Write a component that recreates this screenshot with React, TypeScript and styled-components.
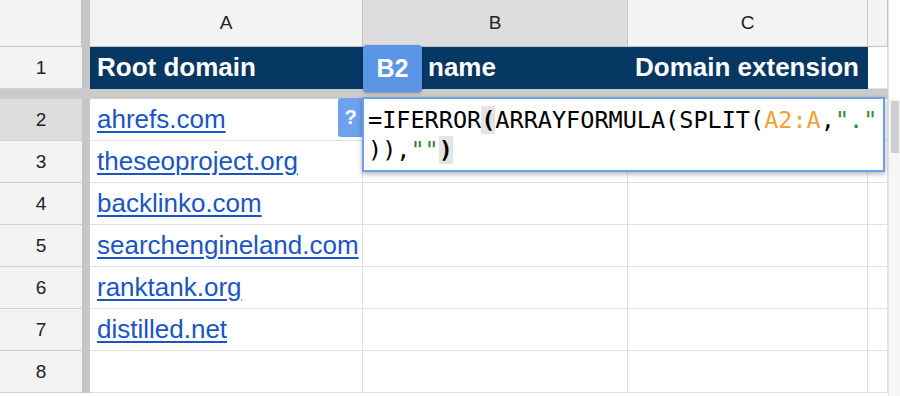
import styled, {createGlobalStyle} from 'styled-components'

const GlobalStyle = createGlobalStyle`
  html, body {
    margin: 0;
    padding: 0;
    background: #ffffff;
    overflow: hidden;
  }
  * {
    box-sizing: border-box;
  }
`

const COLUMNS = '82px 8px 273px 265px 240px 20px'
const SANS = '"Liberation Sans", Arial, sans-serif'
const MONO = '"DejaVu Sans Mono", "Liberation Mono", monospace'

const Sheet = styled.div`
  position: relative;
  display: flex;
  width: 900px;
  height: 396px;
  overflow: hidden;
  font-family: ${SANS};
`
const Grid = styled.div`
  display: flex;
  flex-direction: column;
  width: 888px;
  flex: none;
`
const Row = styled.div<{$h: number}>`
  display: grid;
  grid-template-columns: ${COLUMNS};
  height: ${p => p.$h}px;
  flex: none;
`
const HeadCell = styled.div<{$selected?: boolean}>`
  display: flex;
  align-items: center;
  justify-content: center;
  background: ${p => (p.$selected ? '#dddddd' : '#f3f3f3')};
  border-right: 1px solid #c4c4c4;
  border-bottom: 1px solid #c4c4c4;
  font-size: 19px;
  color: #222222;
`
const RowHead = styled.div<{$selected?: boolean}>`
  display: flex;
  align-items: center;
  justify-content: center;
  background: ${p => (p.$selected ? '#dddddd' : '#f3f3f3')};
  border-bottom: 1px solid #d2d2d2;
  font-size: 19px;
  color: #222222;
`
const FreezeCol = styled.div`
  background: #c6c6c6;
`
const FreezeBar = styled.div`
  height: 10px;
  flex: none;
  background: #cbcbcb;
`
const Cell = styled.div<{$dark?: boolean; $indent?: number}>`
  display: flex;
  align-items: center;
  padding-left: ${p => p.$indent ?? 7}px;
  overflow: hidden;
  white-space: nowrap;
  background: ${p => (p.$dark ? '#073763' : '#ffffff')};
  border-right: 1px solid ${p => (p.$dark ? '#0a3a66' : '#e0e0e0')};
  border-bottom: 1px solid ${p => (p.$dark ? '#073763' : '#e0e0e0')};
  font-size: 26px;
  font-weight: ${p => (p.$dark ? 700 : 400)};
  color: ${p => (p.$dark ? '#ffffff' : '#000000')};
`
const Link = styled.span`
  color: #1a55c4;
  text-decoration: underline;
  text-decoration-thickness: 2px;
  text-underline-offset: 3px;
`
const Scrollbar = styled.div`
  position: relative;
  width: 12px;
  flex: none;
  background: #ffffff;
  border-left: 1px solid #e6e6e6;
`
const Track = styled.div`
  margin-top: 99px;
  height: 297px;
  background: #f6f6f6;
  padding: 2px 1px 0 2px;
`
const Thumb = styled.div`
  height: 52px;
  background: #cfcfcf;
`

/* overlays: the selected-cell badge, help tab and the formula editor */
const CellBadge = styled.div`
  position: absolute;
  left: 363px;
  top: 45px;
  width: 59px;
  height: 47px;
  display: flex;
  align-items: center;
  justify-content: center;
  background: #5b95e6;
  border-radius: 4px;
  box-shadow: 0 1px 3px rgba(0, 0, 0, 0.35);
  color: #ffffff;
  font-size: 25px;
  font-weight: 700;
`
const HelpTab = styled.div`
  position: absolute;
  left: 338px;
  top: 98px;
  width: 25px;
  height: 39px;
  display: flex;
  align-items: center;
  justify-content: center;
  background: #6fa2ee;
  border-radius: 3px 0 0 3px;
  color: #ffffff;
  font-size: 20px;
  font-weight: 700;
`
const Editor = styled.div`
  position: absolute;
  left: 362px;
  top: 97px;
  width: 523px;
  height: 75px;
  padding: 6px 0 0 4px;
  background: #ffffff;
  border: 2px solid #6d9eeb;
  box-shadow: 0 2px 5px rgba(0, 0, 0, 0.3);
  font-family: ${MONO};
  font-size: 23.5px;
  line-height: 30px;
  color: #000000;
  white-space: pre-wrap;
  word-break: break-all;
  line-break: anywhere;
`
const Range = styled.span`
  color: #f0a23b;
`
const Str = styled.span`
  color: #2e8b3a;
`
const Paren = styled.span`
  background: #e4e4e4;
  font-weight: 700;
`

const domains = ['ahrefs.com', 'theseoproject.org', 'backlinko.com', 'searchengineland.com', 'ranktank.org', 'distilled.net', '']

export default function App() {
  return (
    <>
      <GlobalStyle />
      <Sheet>
        <Grid>
          <Row $h={47}>
            <HeadCell />
            <FreezeCol />
            <HeadCell>A</HeadCell>
            <HeadCell $selected>B</HeadCell>
            <HeadCell>C</HeadCell>
            <HeadCell />
          </Row>
          <Row $h={42}>
            <RowHead>1</RowHead>
            <FreezeCol />
            <Cell $dark>Root domain</Cell>
            <Cell $dark $indent={65}>name</Cell>
            <Cell $dark>Domain extension</Cell>
            <Cell />
          </Row>
          <FreezeBar />
          {domains.map((d, i) => (
            <Row $h={42} key={i}>
              <RowHead $selected={i === 0}>{i + 2}</RowHead>
              <FreezeCol />
              <Cell>{d && <Link>{d}</Link>}</Cell>
              <Cell />
              <Cell />
              <Cell />
            </Row>
          ))}
        </Grid>
        <Scrollbar>
          <Track>
            <Thumb />
          </Track>
        </Scrollbar>

        <CellBadge>B2</CellBadge>
        <HelpTab>?</HelpTab>
        <Editor>
          =IFERROR<Paren>(</Paren>ARRAYFORMULA(SPLIT(<Range>A2:A</Range>,<Str>"."</Str>)),<Str>""</Str><Paren>)</Paren>
        </Editor>
      </Sheet>
    </>
  )
}
